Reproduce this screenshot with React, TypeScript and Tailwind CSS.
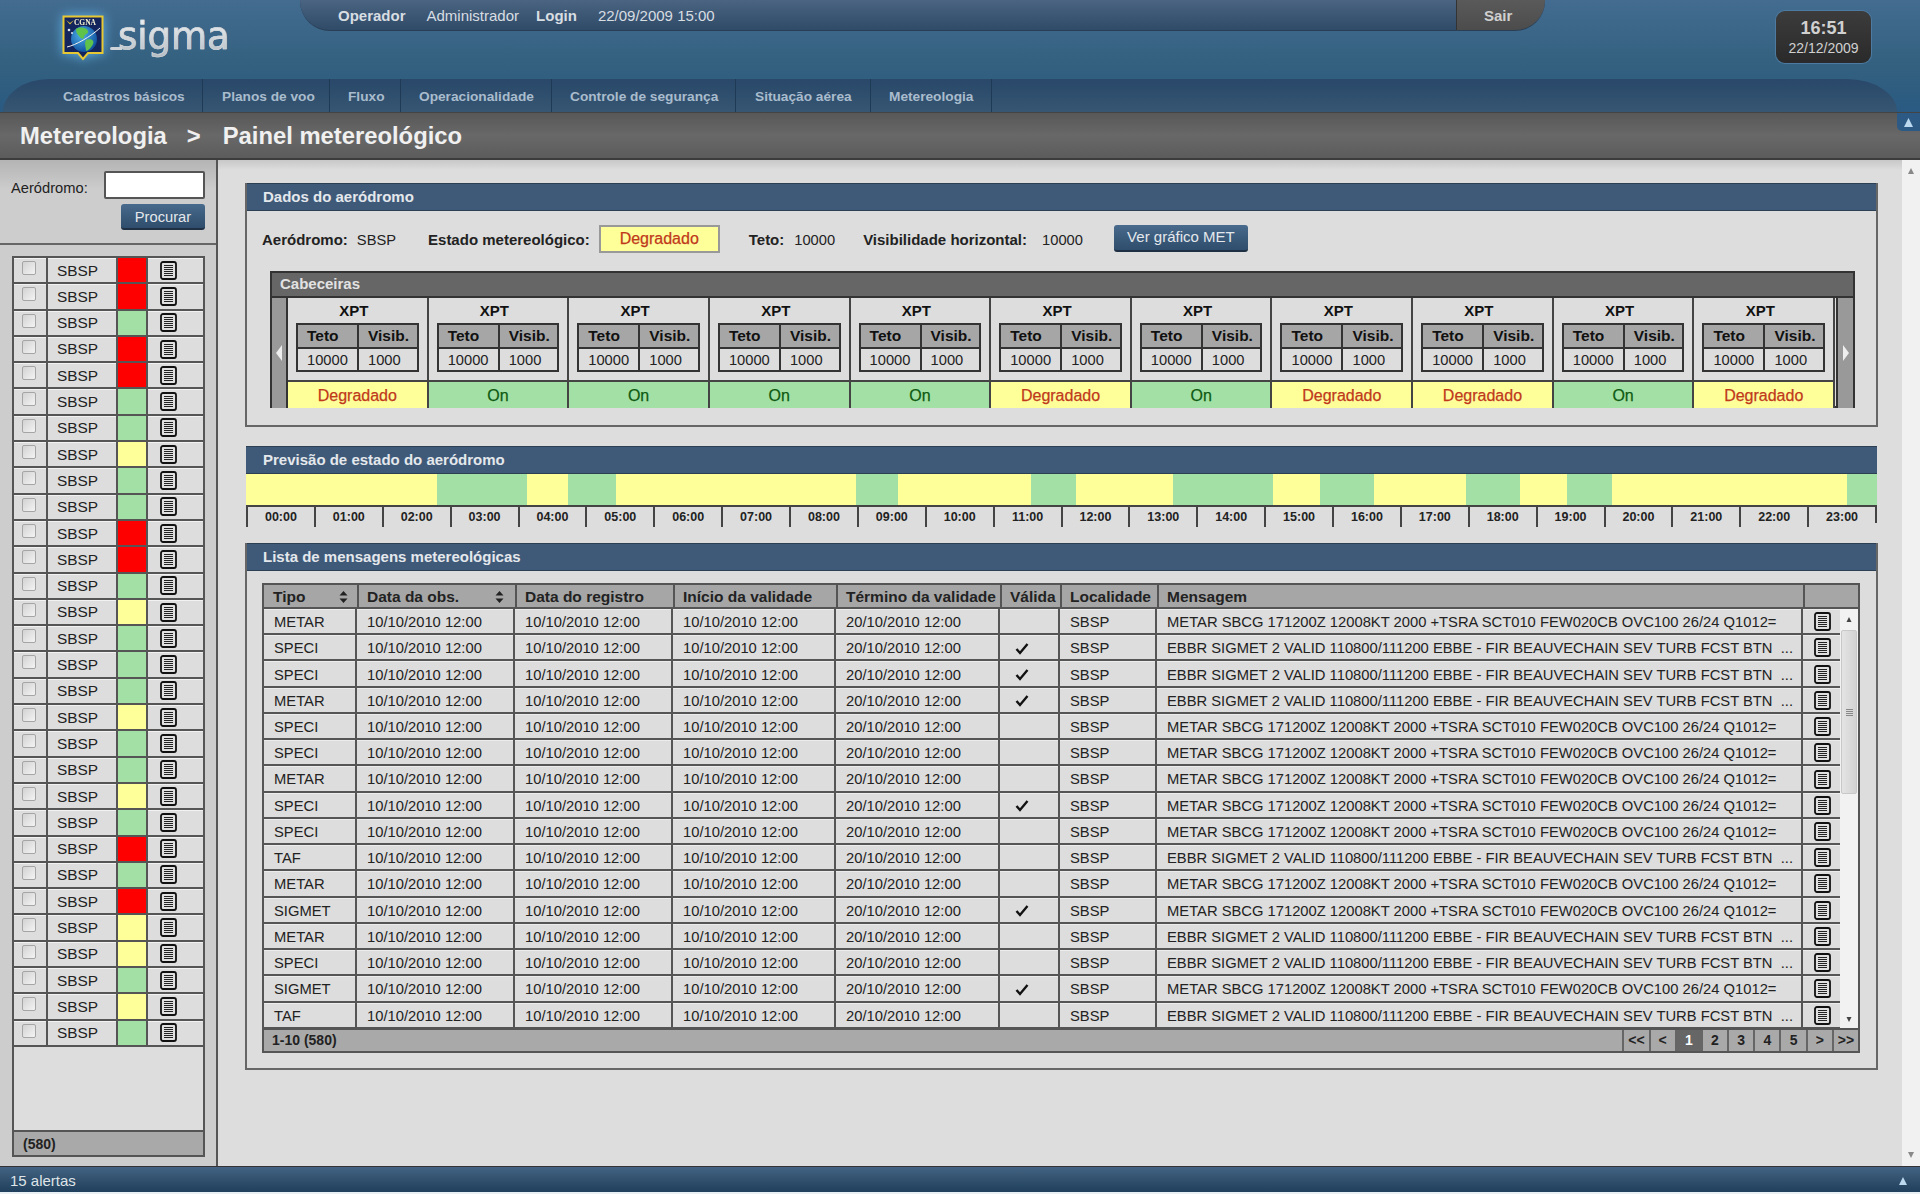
import React from "react";

const arial = "font-['Liberation_Sans',Arial,sans-serif]";

const navItems = [
  { label: "Cadastros básicos", w: "w-[203px] pl-[63px]" },
  { label: "Planos de voo", w: "w-[127px] pl-[19px]" },
  { label: "Fluxo", w: "w-[71px] pl-[18px]" },
  { label: "Operacionalidade", w: "w-[151px] pl-[18px]" },
  { label: "Controle de segurança", w: "w-[184px] pl-[18px]" },
  { label: "Situação aérea", w: "w-[135px] pl-[19px]" },
  { label: "Metereologia", w: "w-[121px] pl-[18px]" },
];

const sideColors = "r r g r r g g y g g r r g y g g g y g g y g r g r y y g y g".split(" ");

const statuses = ["D", "O", "O", "O", "O", "D", "O", "D", "D", "O", "D"];

// largura em px de cada faixa da previsão
const forecast: [string, number][] = [
  ["y", 191], ["g", 90], ["y", 41], ["g", 48], ["y", 240], ["g", 42], ["y", 133], ["g", 45],
  ["y", 97], ["g", 100], ["y", 47], ["g", 54], ["y", 92], ["g", 54], ["y", 47], ["g", 45],
  ["y", 235], ["g", 30],
];

const hours = Array.from({ length: 24 }, (_, i) => String(i).padStart(2, "0") + ":00");

const msgA = "METAR SBCG 171200Z 12008KT 2000 +TSRA SCT010 FEW020CB OVC100 26/24 Q1012=";
const msgB = "EBBR SIGMET 2 VALID 110800/111200 EBBE - FIR BEAUVECHAIN SEV TURB FCST BTN\u00a0 ...";

const messages: [string, boolean, string][] = [
  ["METAR", false, msgA],
  ["SPECI", true, msgB],
  ["SPECI", true, msgB],
  ["METAR", true, msgB],
  ["SPECI", false, msgA],
  ["SPECI", false, msgA],
  ["METAR", false, msgA],
  ["SPECI", true, msgA],
  ["SPECI", false, msgA],
  ["TAF", false, msgB],
  ["METAR", false, msgA],
  ["SIGMET", true, msgA],
  ["METAR", false, msgB],
  ["SPECI", false, msgB],
  ["SIGMET", true, msgA],
  ["TAF", false, msgB],
];

const tableCols = "grid grid-cols-[95px_158px_158px_163px_164px_60px_97px_646px_1fr]";
const rowCell = "border-r-2 border-[#555] pl-[10px] pt-[2px] flex items-center";

function Shield() {
  return (
    <svg width="42" height="46" viewBox="0 0 42 46" className="drop-shadow-[0_0_6px_#5fb0e8]">
      <defs>
        <radialGradient id="globe" cx="0.4" cy="0.35" r="0.7">
          <stop offset="0" stopColor="#4fb0ea" />
          <stop offset="1" stopColor="#0b4c9a" />
        </radialGradient>
      </defs>
      <path d="M1.5 1.5H40.5V38H26L21 44L16 38H1.5Z" fill="#14245c" stroke="#e8c832" strokeWidth="2" />
      <text x="23" y="9.5" fontSize="7.5" fontWeight="700" fill="#f4f0d0" textAnchor="middle" fontFamily="Liberation Serif">
        CGNA
      </text>
      <path d="M4 5L8 8L12 5L8 9.5Z" fill="#e8c832" />
      <circle cx="22" cy="24" r="13" fill="url(#globe)" />
      <path d="M14 14C19 11 25 13 26 16C27 19 22 19 22 22C22 25 19 24 17 21C15 19 14 17 14 14Z" fill="#5fc24a" />
      <path d="M24 25C28 23 33 25 31 29C29 33 26 36 24 36C24 32 22 28 24 25Z" fill="#5fc24a" />
      <path d="M5 32C14 30 28 22 38 13" fill="none" stroke="#f2f2f2" strokeWidth="1" />
      <circle cx="7" cy="15" r="1.3" fill="#dfe6ee" />
      <circle cx="10" cy="18" r="1" fill="#dfe6ee" />
    </svg>
  );
}

function DocIcon() {
  return (
    <svg width="17" height="19" viewBox="0 0 17 19">
      <rect x="1" y="1" width="15" height="17" rx="2" fill="#e0e0e0" stroke="#111" strokeWidth="1.8" />
      <path d="M4 4.5H13M4 6.5H13M4 8.5H13M4 10.5H13M4 12.5H13M4 14.5H13" stroke="#222" strokeWidth="1.2" />
    </svg>
  );
}

function SortIcon() {
  return (
    <svg width="9" height="14" viewBox="0 0 9 14">
      <path d="M4.5 1L8.5 5.5H0.5Z M4.5 13L0.5 8.5H8.5Z" fill="#222" />
    </svg>
  );
}

function CheckIcon() {
  return (
    <svg width="14" height="13" viewBox="0 0 14 13">
      <path d="M1.5 7L5 11L12.5 2" fill="none" stroke="#111" strokeWidth="2.4" />
    </svg>
  );
}

function Triangle({ color, w, h, down }: { color: string; w: number; h: number; down?: boolean }) {
  return (
    <svg width={w} height={h} viewBox="0 0 10 10">
      <path d={down ? "M0 0H10L5 10Z" : "M5 0L10 10H0Z"} fill={color} />
    </svg>
  );
}

function PanelTitle({ children, second }: { children: React.ReactNode; second?: boolean }) {
  return (
    <div
      className={
        "h-[28px] bg-[#3f5a78] border-y border-[#2d3f52] flex items-center font-bold text-[15px] text-[#e4e8ec] shrink-0 " +
        (second ? "pl-[17px] pt-[1px]" : "pl-[16px]")
      }
    >
      {children}
    </div>
  );
}

function Sidebar() {
  return (
    <aside className="w-[218px] shrink-0 bg-[#cccccc] border-r-2 border-[#555] flex flex-col bg-gradient-to-b from-[#b4b4b4] via-[#cdcdcd] via-[3%] to-[#cdcdcd]">
      <div className="h-[85px] border-b-[2px] border-[#666] pr-[11px] shrink-0 flex flex-col items-end pt-[11px]">
        <div className="flex items-center w-full">
          <span className="ml-[11px] pt-[6px] text-[14.7px] text-[#222]">Aeródromo:</span>
          <div className="ml-auto w-[101px] h-[28px] bg-white border-2 border-[#555] rounded-[2px]" />
        </div>
        <button className="mt-[5px] w-[84px] h-[26px] pt-[1px] rounded-[3px] border-b-2 border-[#1f3044] bg-gradient-to-b from-[#486a8c] to-[#2f4d6c] text-[14.7px] text-[#e4e8ec]">
          Procurar
        </button>
      </div>
      <div className="mt-[11px] ml-[12px] w-[193px] h-[901px] border-2 border-[#555] bg-[#dddddd] flex flex-col">
        <div className="flex-1">
          {sideColors.map((c, i) => (
            <div key={i} className="h-[26.3px] grid grid-cols-[34px_70px_30px_1fr] border-b-2 border-[#555] shadow-[inset_0_1px_0_#f2f2f2]">
              <div className="border-r-2 border-[#555] pl-[8px] pt-[3px]">
                <div className="w-[14px] h-[14px] rounded-[2px] border border-[#a5a5a5] bg-gradient-to-br from-[#d2d2d2] to-[#f4f4f4]" />
              </div>
              <div className="border-r-2 border-[#555] pl-[9px] flex items-center text-[15.4px] text-[#222]">SBSP</div>
              <div
                className={
                  "border-r-2 border-[#555] " +
                  (c === "r" ? "bg-[#ff0000]" : c === "g" ? "bg-[#a3e0a5]" : "bg-[#ffff99]")
                }
              />
              <div className="pl-[12px] flex items-center">
                <DocIcon />
              </div>
            </div>
          ))}
        </div>
        <div className="h-[25px] pt-[1px] bg-[#a9a9a9] border-t-2 border-[#555] flex items-center pl-[9px] text-[14px] font-bold text-[#222] shrink-0">
          (580)
        </div>
      </div>
    </aside>
  );
}

function Cabeceira({ status }: { status: string }) {
  return (
    <div className="flex-1 border-r-2 border-[#444] flex flex-col">
      <div className="h-[25px] flex items-center justify-center text-[15px] font-bold text-[#111] pt-[2px] pr-[7px]">XPT</div>
      <div className="mx-[8px] border-2 border-[#333] h-[49px] grid grid-cols-[61px_1fr] grid-rows-[24px_1fr]">
        <div className="bg-[#a6a6a6] border-r-2 border-b-2 border-[#333] pl-[9px] flex items-center text-[15.5px] font-bold text-[#111]">Teto</div>
        <div className="bg-[#a6a6a6] border-b-2 border-[#333] pl-[9px] flex items-center text-[15.5px] font-bold text-[#111]">Visib.</div>
        <div className="border-r-2 border-[#333] pl-[9px] flex items-center text-[14.7px] text-[#222]">10000</div>
        <div className="pl-[9px] flex items-center text-[14.7px] text-[#222]">1000</div>
      </div>
      <div
        className={
          "mt-[8px] flex-1 border-t-2 border-[#444] flex items-center justify-center pt-[2px] text-[16px] [-webkit-text-stroke:0.25px] " +
          (status === "D" ? "bg-[#ffff99] text-[#c0391b]" : "bg-[#a3e0a5] text-[#0f5a12]")
        }
      >
        {status === "D" ? "Degradado" : "On"}
      </div>
    </div>
  );
}

function DadosPanel() {
  return (
    <section className="h-[244px] border-2 border-t-0 border-[#666] bg-[#dddddd] flex flex-col">
      <PanelTitle>Dados do aeródromo</PanelTitle>
      <div className="h-[56px] flex items-center text-[14.7px] text-[#222] shrink-0">
        <b className="ml-[15px] pt-[2px] text-[15px]">Aeródromo:</b>
        <span className="ml-[9px] pt-[2px]">SBSP</span>
        <b className="ml-[32px] pt-[2px] text-[15px]">Estado metereológico:</b>
        <div className="ml-[9px] w-[121px] h-[28px] bg-[#ffff99] border-2 border-[#999] flex items-center justify-center text-[16px] [-webkit-text-stroke:0.25px] text-[#c0391b]">
          Degradado
        </div>
        <b className="ml-[29px] pt-[2px] text-[15px]">Teto:</b>
        <span className="ml-[10px] pt-[2px]">10000</span>
        <b className="ml-[28px] pt-[2px] text-[15px]">Visibilidade horizontal:</b>
        <span className="ml-[15px] pt-[2px]">10000</span>
        <button className="ml-[31px] -mt-[2px] w-[134px] h-[27px] rounded-[3px] border-b-2 border-[#1f3044] bg-gradient-to-b from-[#486a8c] to-[#2f4d6c] text-[15px] text-[#e4e8ec]">
          Ver gráfico MET
        </button>
      </div>
      <div className="mt-[4px] ml-[23px] w-[1585px] h-[137px] border-2 border-[#333] flex flex-col">
        <div className="h-[23px] bg-[#666666] flex items-center pl-[8px] text-[15px] font-bold text-[#e2e2e2] shrink-0">
          Cabeceiras
        </div>
        <div className="flex-1 flex border-t-2 border-[#333]">
          <div className="w-[16px] bg-[#999999] border-r-2 border-[#333] flex items-center justify-center">
            <svg width="7" height="16" viewBox="0 0 7 16"><path d="M6 0V16L0 8Z" fill="#eee" /></svg>
          </div>
          <div className="flex-1 flex">
            {statuses.map((s, i) => (
              <Cabeceira key={i} status={s} />
            ))}
          </div>
          <div className="ml-[1px] w-[17px] bg-[#999999] border-l-2 border-[#333] flex items-center justify-center">
            <svg width="7" height="16" viewBox="0 0 7 16"><path d="M1 0V16L7 8Z" fill="#eee" /></svg>
          </div>
        </div>
      </div>
    </section>
  );
}

function PrevisaoPanel() {
  return (
    <section className="mx-[1px] h-[78px] flex flex-col">
      <PanelTitle second>Previsão de estado do aeródromo</PanelTitle>
      <div className="h-[33px] flex shrink-0 border-b-2 border-[#444]">
        {forecast.map(([c, w], i) => (
          <div key={i} className={c === "g" ? "bg-[#a3e0a5]" : "bg-[#ffff99]"} style={{ width: w }} />
        ))}
      </div>
      <div className="h-[16px] grid grid-cols-[repeat(24,1fr)] border-r-2 border-[#444]">
        {hours.map((h) => (
          <div key={h} className="border-l-2 border-[#444] pt-[1px] flex items-center justify-center text-[12.5px] font-bold text-[#222]">
            {h}
          </div>
        ))}
      </div>
    </section>
  );
}

function MensagensPanel() {
  const head = ["Data do registro", "Início da validade", "Término da validade", "Válida", "Localidade", "Mensagem"];
  return (
    <section className="h-[527px] border-2 border-t-0 border-[#666] bg-[#dddddd] flex flex-col">
      <PanelTitle>Lista de mensagens metereológicas</PanelTitle>
      <div className="mt-[12px] ml-[15px] w-[1598px] flex flex-col">
        <div className={tableCols + " h-[26px] bg-[#a6a6a6] border-t-2 border-x-2 border-b-2 border-[#555] text-[15.5px] font-bold text-[#222]"}>
          <div className="border-r-2 border-[#555] pl-[9px] pr-[9px] flex items-center justify-between">
            Tipo <SortIcon />
          </div>
          <div className="border-r-2 border-[#555] pl-[8px] pr-[11px] flex items-center justify-between">
            Data da obs. <SortIcon />
          </div>
          {head.map((h) => (
            <div key={h} className="border-r-2 border-[#555] pl-[8px] flex items-center whitespace-nowrap overflow-hidden">
              {h}
            </div>
          ))}
          <div />
        </div>
        <div className="h-[419px] flex overflow-hidden border-l-2 border-[#555]">
          <div className="w-[1576px] shrink-0">
            {messages.map(([tipo, ok, msg], i) => (
              <div
                key={i}
                className="h-[26.24px] grid grid-cols-[93px_158px_158px_163px_164px_60px_97px_646px_1fr] border-b-2 border-[#555] shadow-[inset_0_1px_0_#ececec] text-[14.75px] text-[#222]"
              >
                <div className={rowCell}>{tipo}</div>
                <div className={rowCell}>10/10/2010 12:00</div>
                <div className={rowCell}>10/10/2010 12:00</div>
                <div className={rowCell}>10/10/2010 12:00</div>
                <div className={rowCell}>20/10/2010 12:00</div>
                <div className="border-r-2 border-[#555] pr-[14px] pt-[2px] flex items-center justify-center">{ok && <CheckIcon />}</div>
                <div className={rowCell}>SBSP</div>
                <div className={rowCell + " whitespace-nowrap overflow-hidden"}>{msg}</div>
                <div className="pl-[11px] pt-[1px] flex items-center">
                  <DocIcon />
                </div>
              </div>
            ))}
          </div>
          <div className="flex-1 bg-[#f2f2f2] border-r-2 border-[#555] flex flex-col items-center">
            <div className="h-[20px] flex items-center">
              <Triangle color="#444" w={8} h={5} />
            </div>
            <div className="w-[16px] h-[164px] mt-[1px] bg-gradient-to-r from-[#e4e4e4] to-[#d2d2d2] border border-[#c8c8c8] rounded-[2px] flex flex-col items-center justify-center gap-[1px]">
              <div className="w-[7px] h-[1px] bg-[#888]" />
              <div className="w-[7px] h-[1px] bg-[#888]" />
              <div className="w-[7px] h-[1px] bg-[#888]" />
              <div className="w-[7px] h-[1px] bg-[#888]" />
            </div>
            <div className="mt-auto h-[18px] flex items-center">
              <Triangle color="#444" w={8} h={5} down />
            </div>
          </div>
        </div>
        <div className="h-[25px] bg-[#a9a9a9] border-x-2 border-b-2 border-t-2 border-[#555] flex items-center">
          <span className="ml-[8px] text-[14px] font-bold text-[#222]">1-10 (580)</span>
          <div className="ml-auto flex h-full">
            {["<<", "<", "1", "2", "3", "4", "5", ">", ">>"].map((p) => (
              <div
                key={p}
                className={
                  "w-[26.2px] border-l-2 border-[#666] flex items-center justify-center text-[14px] font-bold " +
                  (p === "1" ? "bg-[#666666] text-white" : "text-[#222]")
                }
              >
                {p}
              </div>
            ))}
          </div>
        </div>
      </div>
    </section>
  );
}

export default function App() {
  return (
    <div className={"w-[1920px] h-[1194px] overflow-hidden flex flex-col bg-[#e8f0f4] " + arial}>
      <header className="h-[112px] shrink-0 bg-gradient-to-b from-[#436c90] via-[#33607f] via-[60%] to-[#2a5a82] flex flex-col">
        <div className="h-[79px] shrink-0 flex items-start relative">
          <div className="w-[300px] shrink-0 flex items-start pl-[62px] pt-[15px] relative">
            <Shield />
            <span className="ml-[14px] -mt-[5px] font-['DejaVu_Sans',sans-serif] text-[37px] leading-[54px] [-webkit-text-stroke:0.6px_#d5dade] bg-gradient-to-b from-[#fdfdfd] to-[#a9b2ba] bg-clip-text text-transparent">
              sigma
            </span>
            <div className="absolute left-[110px] top-[47px] w-[12px] h-[3px] rounded-l-[2px] bg-[#cfd4d9]" />
          </div>
          <div className="w-[1245px] h-[31px] flex">
            <div className="w-[1156px] rounded-bl-[30px] border-b border-[#2a3f55] bg-gradient-to-b from-[#4a6481] to-[#2f4b68] flex items-center pl-[38px] pt-[2px] text-[15px] text-[#d8dde2]">
              <b>Operador</b>
              <span className="ml-[21px]">Administrador</span>
              <b className="ml-[17px]">Login</b>
              <span className="ml-[21px]">22/09/2009 15:00</span>
            </div>
            <div className="flex-1 rounded-br-[30px] border-b border-[#2a3f55] bg-gradient-to-b from-[#5a5a5a] to-[#4c4c4c] border-l border-l-[#333] flex items-center pl-[27px] pt-[2px] text-[15px] font-bold text-[#cfcfcf]">
              Sair
            </div>
          </div>
          <div className="ml-auto mr-[49px] mt-[11px] w-[95px] h-[52px] rounded-[9px] bg-gradient-to-b from-[#3c3c3c] to-[#2a2a2a] shadow-[0_0_0_1px_#4d7aa0] flex flex-col items-center justify-center text-[#d0d0d0]">
            <b className="text-[18px] leading-[21px]">16:51</b>
            <span className="text-[14px] leading-[18px]">22/12/2009</span>
          </div>
        </div>
        <div className="ml-[3px] w-[1894px] h-[33px] rounded-tl-[46px_33px] rounded-tr-[50px_33px] bg-gradient-to-b from-[#29486a] to-[#365672] flex">
          {navItems.map((n) => (
            <div
              key={n.label}
              className={n.w + " border-r border-[#1e3a55] pt-[3px] flex items-center text-[13.7px] font-bold text-[#a9bccd] whitespace-nowrap first:-ml-[3px]"}
            >
              {n.label}
            </div>
          ))}
        </div>
      </header>

      <div className="h-[48px] shrink-0 border-t border-[#444] border-b-2 border-b-[#3c3c3c] bg-gradient-to-b from-[#585858] via-[#686868] to-[#5c5c5c] flex items-center relative">
        <span className="ml-[20px] text-[23.8px] font-bold text-[#f0f0f0]">Metereologia</span>
        <span className="ml-[20px] text-[23.8px] font-bold text-[#f0f0f0]">&gt;</span>
        <span className="ml-[22px] text-[23.8px] font-bold text-[#f0f0f0]">Painel metereológico</span>
        <div className="absolute right-0 top-0 w-[23px] h-[18px] rounded-bl-[5px] bg-[#2d5a85] flex items-center justify-center">
          <Triangle color="#bcd8ee" w={13} h={9} />
        </div>
      </div>

      <div className="h-[1006px] shrink-0 flex">
        <Sidebar />
        <main className="w-[1684px] bg-gradient-to-b from-[#c8c8c8] via-[#dddddd] via-[1%] to-[#dddddd] pt-[23px] pl-[27px]">
          <div className="w-[1633px] flex flex-col gap-[19px]">
            <DadosPanel />
            <PrevisaoPanel />
            <MensagensPanel />
          </div>
        </main>
        <div className="w-[18px] bg-[#f1f1f1] flex flex-col items-center justify-between py-[8px]">
          <Triangle color="#888" w={8} h={6} />
          <Triangle color="#888" w={8} h={6} down />
        </div>
      </div>

      <footer className="h-[26px] shrink-0 border-t border-[#333] bg-gradient-to-b from-[#436482] to-[#1f3f5c] flex items-center pl-[10px] pr-[11px] pt-[3px] justify-between text-[15px] text-[#dfe4e8]">
        15 alertas
        <Triangle color="#bcd8ee" w={12} h={8} />
      </footer>
    </div>
  );
}
